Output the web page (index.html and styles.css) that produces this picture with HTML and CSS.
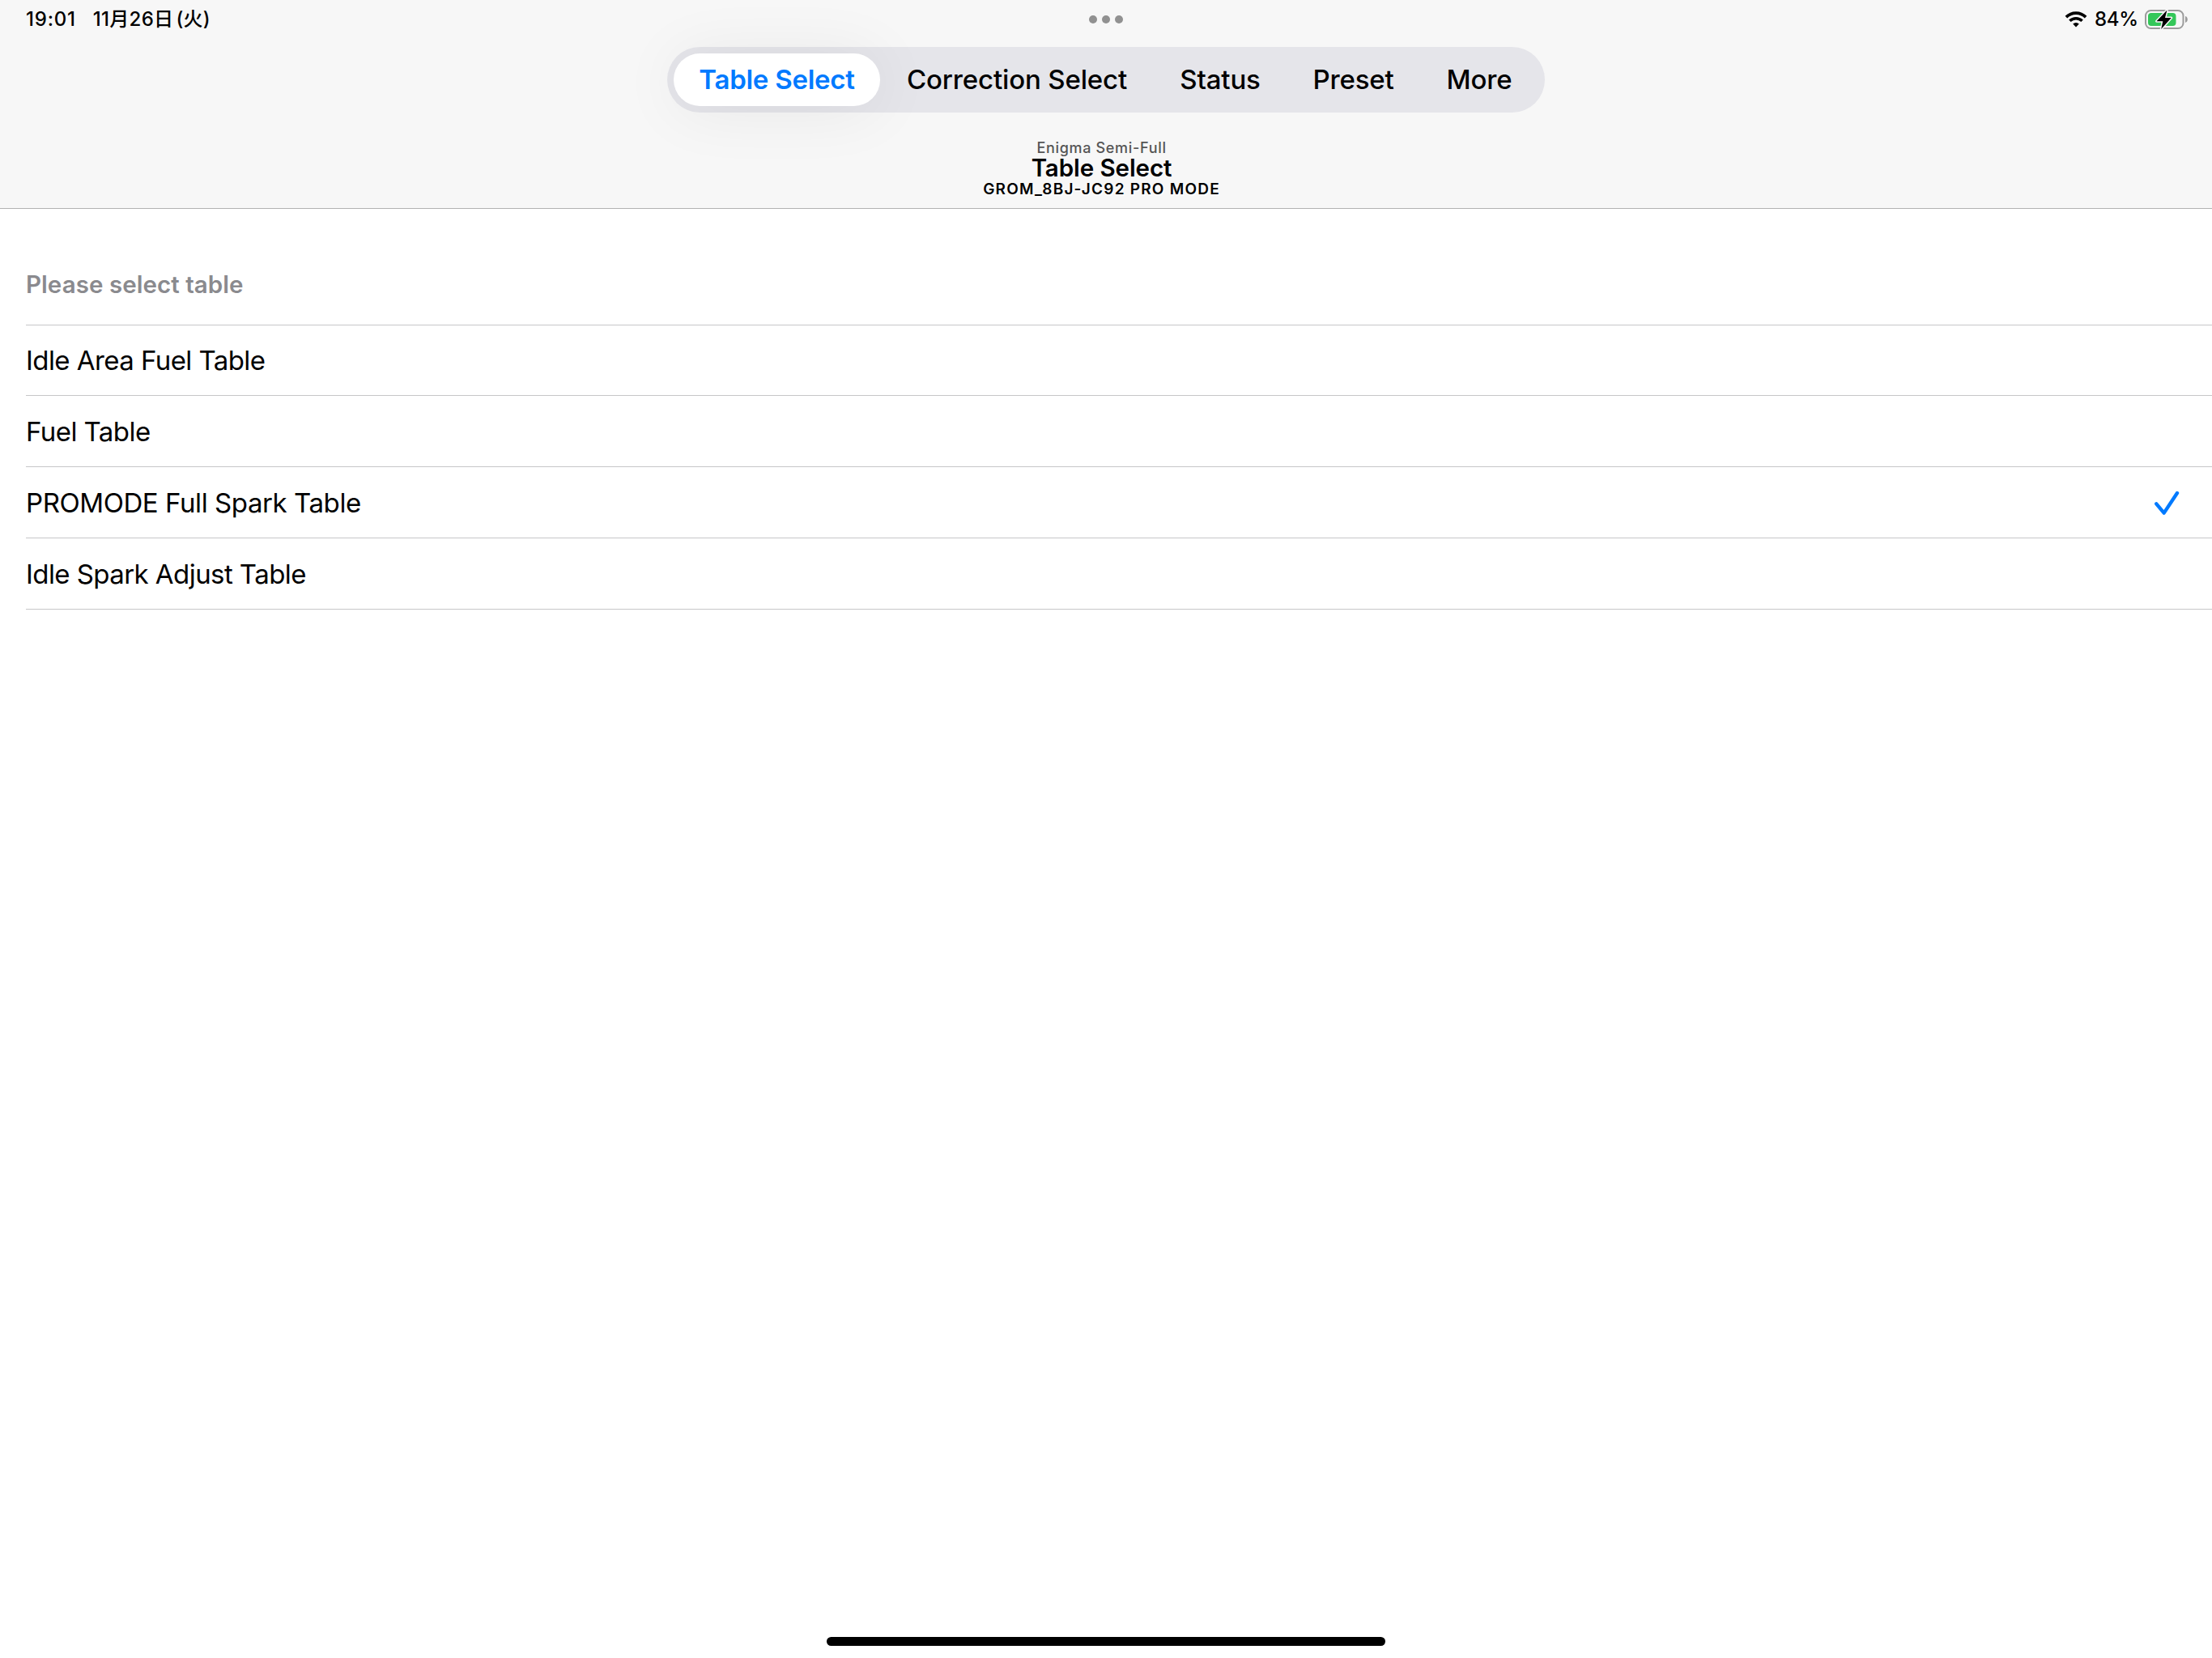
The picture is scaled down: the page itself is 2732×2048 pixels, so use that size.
FILE: index.html
```
<!DOCTYPE html>
<html lang="ja">
<head>
  <meta charset="UTF-8">
  <title>Table Select</title>
  <meta name="viewport" content="width=device-width, initial-scale=1.0" />
  <link rel="stylesheet" href="styles.css">
</head>
<body>
  <header class="header">
    <div class="status-bar">
      <div class="status-left">
        <span class="time">19:01</span>
        <span class="date">11月26日<span class="weekday">(火)</span></span>
      </div>
      <div class="dots"><i></i><i></i><i></i></div>
      <div class="status-right">
        <svg class="wifi" width="28" height="20" viewBox="0 0 28 20">
          <path d="M1.9 7.1a17 17 0 0 1 24.2 0" fill="none" stroke="#000" stroke-width="3.7" />
          <path d="M6.4 11.8a10.7 10.7 0 0 1 15.2 0" fill="none" stroke="#000" stroke-width="3.5" />
          <path d="M10.2 15.4a5.500 5.500 0 0 1 7.600 0L14 19.600z" fill="#000" />
        </svg>
        <span class="percent">84%</span>
        <svg class="battery" width="54" height="28" viewBox="0 0 54 28">
          <rect x="1" y="3" width="46.5" height="22" rx="6.5" fill="none" stroke="#9b9b9b" stroke-width="2" />
          <path d="M50 10c2 .6 2.800 2.200 2.800 4s-.8 3.400-2.800 4z" fill="#9b9b9b" />
          <rect x="4" y="6" width="34.5" height="16" rx="4" fill="#34c759" />
          <path d="M27.500 2.500L14.500 16.200h7.800L20.200 26 32.800 12h-7.800z" fill="#000" stroke="#f7f7f7" stroke-width="3" paint-order="stroke" stroke-linejoin="round" />
        </svg>
      </div>
    </div>

    <nav class="tabs">
      <a class="tab tab-table active">Table Select</a>
      <a class="tab tab-correction">Correction Select</a>
      <a class="tab tab-status">Status</a>
      <a class="tab tab-preset">Preset</a>
      <a class="tab tab-more">More</a>
    </nav>

    <div class="titles">
      <div class="subtitle">Enigma Semi-Full</div>
      <h1>Table Select</h1>
      <div class="model">GROM_8BJ-JC92 PRO MODE</div>
    </div>
  </header>

  <main class="list">
    <h2>Please select table</h2>
    <ul>
      <li>Idle Area Fuel Table</li>
      <li>Fuel Table</li>
      <li class="wide">PROMODE Full Spark Table
        <svg class="check" width="32" height="32" viewBox="0 0 32 32">
          <path d="M3.3 17.3L12.7 28.6 29 4" fill="none" stroke="#007aff" stroke-width="4.4" stroke-linecap="round" stroke-linejoin="round" />
        </svg>
      </li>
      <li>Idle Spark Adjust Table</li>
    </ul>
  </main>

  <div class="home-indicator"></div>
</body>
</html>
```
FILE: styles.css
```
* {
  box-sizing: border-box;
}

body {
  font-family: Inter, "Noto Sans CJK JP", sans-serif;
  background-color: #fff;
  margin: 0;
  height: 100vh;
  color: #000;
  display: flex;
  flex-direction: column;
  overflow: hidden;
}

.header {
  height: 258px;
  background-color: #f7f7f7;
  border-bottom: 1px solid #b2b2b2;
}

/* status bar */
.status-bar {
  display: grid;
  grid-template-columns: 1fr auto 1fr;
  align-items: center;
  height: 48px;
  padding: 0 29px 0 32px;
  font-size: 24px;
  font-weight: 500;
  line-height: 48px;
}

.status-left {
  display: flex;
  gap: 21px;
}

.time {
  letter-spacing: 0.79px;
}

.date {
  letter-spacing: 0.3px;
}

.weekday {
  margin-left: 3px;
}

.dots {
  display: flex;
  gap: 6px;
  margin-right: 3px;
}

.dots i {
  width: 10px;
  height: 10px;
  border-radius: 50%;
  background-color: #919191;
}

.status-right {
  display: flex;
  align-items: center;
  justify-content: flex-end;
}

.percent {
  margin: 0 8px 0 9px;
  letter-spacing: -0.2px;
}

/* segmented tabs */
.tabs {
  display: flex;
  width: 1084px;
  height: 81px;
  margin: 10px auto 0;
  padding: 8px;
  border-radius: 41px;
  background-color: #e5e5ea;
}

.tab {
  height: 65px;
  line-height: 65px;
  border-radius: 33px;
  font-size: 33px;
  font-weight: 500;
  letter-spacing: -0.15px;
  text-align: center;
}

.tab.active {
  background-color: #fff;
  color: #007aff;
  font-weight: 600;
  letter-spacing: -0.25px;
  box-shadow: 0 4px 80px rgba(0, 0, 0, 0.07);
}

.tab-table {
  width: 255px;
}

.tab-correction {
  width: 338px;
}

.tab-status {
  width: 164px;
}

.tab-preset {
  width: 165px;
}

.tab-more {
  width: 146px;
}

/* navigation title */
.titles {
  padding: 32px 11px 0 0;
  text-align: center;
}

.subtitle {
  color: #555;
  font-size: 18px;
  font-weight: 500;
  line-height: 24px;
  letter-spacing: 0.68px;
}

h1 {
  margin: 0;
  font-size: 29.5px;
  font-weight: 600;
  line-height: 25px;
  letter-spacing: -0.08px;
}

.model {
  font-size: 19px;
  font-weight: 600;
  line-height: 27px;
  letter-spacing: 1.22px;
  text-shadow: 1px 2px 0 #fff;
}

/* table list */
.list {
  flex: 1;
  padding-left: 32px;
}

h2 {
  margin: 0;
  padding: 60px 0 16px;
  border-bottom: 1px solid #c6c6c8;
  color: #8a8a8e;
  font-size: 29.5px;
  font-weight: 600;
  line-height: 67px;
  letter-spacing: 0.06px;
}

ul {
  margin: 0;
  padding: 0;
  list-style: none;
}

li {
  display: flex;
  align-items: center;
  justify-content: space-between;
  height: 88px;
  padding-right: 40px;
  border-bottom: 1px solid #c6c6c8;
  font-size: 33px;
  letter-spacing: -0.57px;
}

li:first-child {
  height: 87px;
}

.wide {
  letter-spacing: -0.43px;
}

.home-indicator {
  width: 690px;
  height: 11px;
  margin: 0 auto 15px;
  border-radius: 6px;
  background-color: #000;
}
```
